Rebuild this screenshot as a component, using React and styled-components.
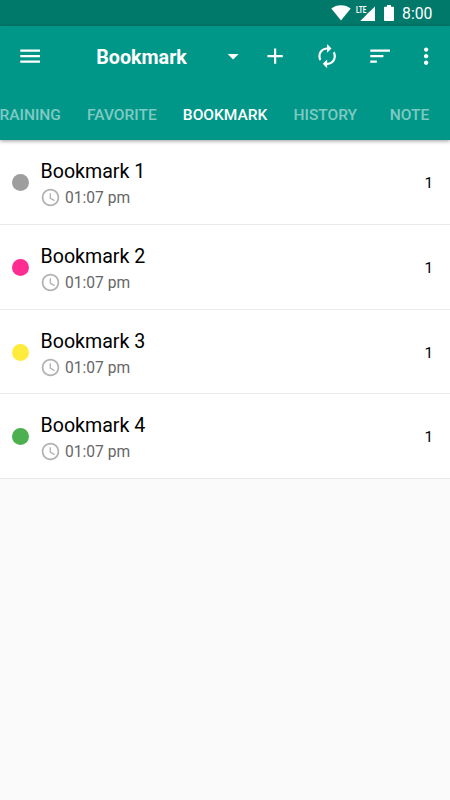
import React, { useState } from "react";
import styled, { createGlobalStyle } from "styled-components";

const GlobalStyle = createGlobalStyle`
  * {
    box-sizing: border-box;
  }
  body {
    margin: 0;
    background-color: #fafafa;
    font-family: Roboto, "Liberation Sans", sans-serif;
  }
`;

const Screen = styled.div`
  width: 450px;
  height: 800px;
  overflow: hidden;
  background-color: #fafafa;
`;

const StatusBar = styled.div`
  height: 26px;
  display: flex;
  align-items: center;
  justify-content: flex-end;
  padding-right: 17.5px;
  background-color: #00796b;
  color: white;
`;

const StatusIcon = styled.svg`
  display: block;
  flex: none;
  margin-right: ${(props) => props.$gap}px;
  fill: white;
`;

const Clock = styled.span`
  font-size: 15.8px;
  line-height: 26px;
  padding-top: 2px;
`;

const Header = styled.header`
  position: relative;
  height: 114px;
  background-color: #009688;
  box-shadow: 0 1px 4px rgba(0, 0, 0, 0.4);
`;

const Toolbar = styled.div`
  height: 61px;
  display: flex;
  align-items: center;
  padding-left: 17px;
`;

const IconButton = styled.button`
  display: block;
  flex: none;
  width: 26.25px;
  height: 26.25px;
  padding: 0;
  border: none;
  background: none;
  margin-left: ${(props) => props.$left || 0}px;

  svg {
    display: block;
    width: 100%;
    height: 100%;
    fill: white;
  }
`;

const Title = styled.h1`
  width: 124px;
  margin: 0 0 0 53px;
  font-size: 19.7px;
  font-weight: 700;
  line-height: 24px;
  padding-top: 3px;
  color: white;
`;

const Tabs = styled.nav`
  height: 53px;
  display: flex;
  margin-left: -23px;
`;

const Tab = styled.button`
  flex: none;
  min-width: 78.75px;
  padding: 3px 13.1px 0;
  border: none;
  background: none;
  font-family: inherit;
  font-size: 15.5px;
  font-weight: 500;
  white-space: nowrap;
  color: ${(props) => (props.$active ? "white" : "rgba(255, 255, 255, 0.5)")};
`;

const List = styled.ul`
  margin: 0;
  padding: 0.7px 0 0;
  list-style: none;
  background-color: white;
`;

const Row = styled.li`
  height: 84.6px;
  display: flex;
  align-items: center;
  padding: 1px 17px 0 11.5px;
  border-bottom: 1px solid #e9e9e9;
`;

const Dot = styled.span`
  width: 17px;
  height: 17px;
  border-radius: 50%;
  background-color: ${(props) => props.$color};
`;

const RowText = styled.div`
  flex: 1;
  margin-left: 12px;
  padding-top: 4px;
`;

const Name = styled.div`
  font-size: 19.6px;
  line-height: 24px;
  color: #000;
`;

const Time = styled.div`
  display: flex;
  align-items: center;
  margin-top: 3px;
  font-size: 15.6px;
  line-height: 22px;
  color: #666;

  svg {
    width: 21px;
    height: 21px;
    margin: -1px 4.5px 0 -1px;
    fill: #b2b2b2;
  }
`;

const Count = styled.span`
  padding-top: 1px;
  font-size: 15.3px;
  color: #000;
`;

const tabs = ["TRAINING", "FAVORITE", "BOOKMARK", "HISTORY", "NOTE"];

const bookmarks = [
  { name: "Bookmark 1", color: "#9e9e9e", time: "01:07 pm", count: 1 },
  { name: "Bookmark 2", color: "#ff2d91", time: "01:07 pm", count: 1 },
  { name: "Bookmark 3", color: "#ffeb3b", time: "01:07 pm", count: 1 },
  { name: "Bookmark 4", color: "#4caf50", time: "01:07 pm", count: 1 },
];

const icons = {
  menu: "M3 18h18v-2H3v2zm0-5h18v-2H3v2zm0-7v2h18V6H3z",
  dropdown: "M7 10l5 5 5-5z",
  add: "M19 13h-6v6h-2v-6H5v-2h6V5h2v6h6v2z",
  refresh:
    "M12 6v3l4-4-4-4v3c-4.42 0-8 3.58-8 8 0 1.57.46 3.03 1.24 4.26L6.7 14.8c-.45-.83-.7-1.79-.7-2.8 0-3.31 2.69-6 6-6zm6.76 1.74L17.3 9.2c.44.84.7 1.79.7 2.8 0 3.31-2.69 6-6 6v-3l-4 4 4 4v-3c4.42 0 8-3.58 8-8 0-1.57-.46-3.03-1.24-4.26z",
  sort: "M3 18h6v-2H3v2zM3 6v2h18V6H3zm0 7h12v-2H3v2z",
  more: "M12 8c1.1 0 2-.9 2-2s-.9-2-2-2-2 .9-2 2 .9 2 2 2zm0 2c-1.1 0-2 .9-2 2s.9 2 2 2 2-.9 2-2-.9-2-2-2zm0 6c-1.1 0-2 .9-2 2s.9 2 2 2 2-.9 2-2-.9-2-2-2z",
  clock:
    "M11.99 2C6.47 2 2 6.48 2 12s4.47 10 9.99 10C17.52 22 22 17.52 22 12S17.52 2 11.99 2zM12 20c-4.42 0-8-3.58-8-8s3.58-8 8-8 8 3.58 8 8-3.58 8-8 8zm.5-13H11v6l5.25 3.15.75-1.23-4.5-2.67z",
};

function Icon({ name }) {
  return (
    <svg viewBox="0 0 24 24">
      <path d={icons[name]} />
    </svg>
  );
}

function App() {
  const [active, setActive] = useState("BOOKMARK");

  return (
    <Screen>
      <GlobalStyle />
      <StatusBar>
        <StatusIcon width="20" height="16" viewBox="0 0 20 16" $gap={4}>
          <path d="M10 15.5L.3 3.6C3 1.4 6.2.2 10 .2s7 1.200 9.700 3.400z" />
        </StatusIcon>
        <StatusIcon width="20" height="17" viewBox="0 0 20 17" $gap={9}>
          <path d="M20 1.500V16H5.200L11.800 9.400V9.200z" />
          <text x="1" y="8" fontSize="9.5" fontWeight="700" textLength="10.5" lengthAdjust="spacingAndGlyphs">
            LTE
          </text>
        </StatusIcon>
        <StatusIcon width="10" height="16" viewBox="0 0 10 16" $gap={8}>
          <path d="M3 0h4v1.7h2q1 0 1 1V15q0 1-1 1H1q-1 0-1-1V2.7q0-1 1-1h2z" />
        </StatusIcon>
        <Clock>8:00</Clock>
      </StatusBar>
      <Header>
        <Toolbar>
          <IconButton aria-label="Menu">
            <Icon name="menu" />
          </IconButton>
          <Title>Bookmark</Title>
          <IconButton aria-label="Choose list">
            <Icon name="dropdown" />
          </IconButton>
          <IconButton aria-label="Add" $left={15.5}>
            <Icon name="add" />
          </IconButton>
          <IconButton aria-label="Refresh" $left={26}>
            <Icon name="refresh" />
          </IconButton>
          <IconButton aria-label="Sort" $left={26.25}>
            <Icon name="sort" />
          </IconButton>
          <IconButton aria-label="More" $left={20}>
            <Icon name="more" />
          </IconButton>
        </Toolbar>
        <Tabs>
          {tabs.map((tab) => (
            <Tab key={tab} $active={tab === active} onClick={() => setActive(tab)}>
              {tab}
            </Tab>
          ))}
        </Tabs>
      </Header>
      <List>
        {bookmarks.map((bookmark) => (
          <Row key={bookmark.name}>
            <Dot $color={bookmark.color} />
            <RowText>
              <Name>{bookmark.name}</Name>
              <Time>
                <Icon name="clock" />
                {bookmark.time}
              </Time>
            </RowText>
            <Count>{bookmark.count}</Count>
          </Row>
        ))}
      </List>
    </Screen>
  );
}

export default App;
